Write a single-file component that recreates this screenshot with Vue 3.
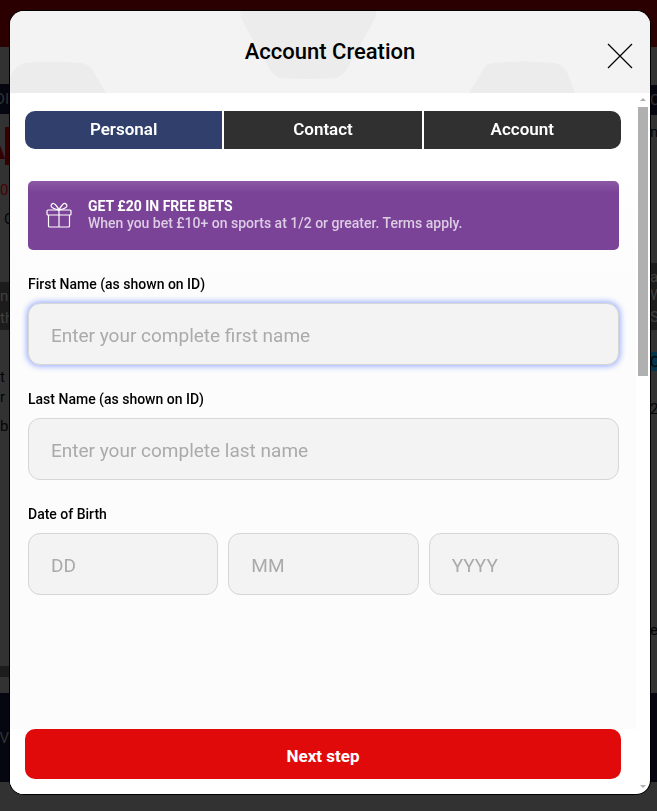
<script setup>
import { ref } from 'vue';

const steps = ['Personal', 'Contact', 'Account'];
const currentStep = ref(0);
const activeField = ref('first');

const form = ref({
    firstName: "",
    lastName: "",
    day: "",
    month: "",
    year: "",
});

// What is left visible of the page on both sides of the dialog
const leftEdge = [
    { h: 47, type: 'maroon' },
    { h: 37 },
    { h: 30, type: 'navy', text: 'DI' },
    { h: 13 },
    { h: 38, type: 'redbar', text: 'A' },
    { h: 15 },
    { h: 20, type: 'redtext', text: '0' },
    { h: 9 },
    { h: 20, type: 'cut', text: 'C' },
    { h: 53 },
    { h: 4, type: 'dark' },
    { h: 20, type: 'dark', text: 'n' },
    { h: 24, type: 'dark', text: 'th' },
    { h: 37 },
    { h: 20, text: 't' },
    { h: 20, text: 'r' },
    { h: 9 },
    { h: 20, text: 'b' },
    { h: 230 },
    { h: 11, type: 'dark' },
    { h: 16 },
    { h: 89, type: 'navy', text: 'V' },
];
const rightEdge = [
    { h: 47, type: 'maroon' },
    { h: 38 },
    { h: 30, type: 'navy', text: 'C' },
    { h: 7 },
    { h: 20, text: 'n' },
    { h: 121 },
    { h: 5, type: 'dark' },
    { h: 18, type: 'dark', text: 'an' },
    { h: 18, type: 'dark', text: 'W' },
    { h: 26, type: 'dark', text: 'St' },
    { h: 22 },
    { h: 19, type: 'blue', text: 'C' },
    { h: 28 },
    { h: 20, text: '2' },
    { h: 201 },
    { h: 20, text: 'e' },
    { h: 53 },
    { h: 89, type: 'navy' },
];

const nextStep = () => {
    if (currentStep.value < steps.length - 1) currentStep.value++;
};
</script>

<template>
    <div class="page">
        <div class="edge left" aria-hidden="true">
            <div v-for="(row, i) in leftEdge" :key="i" class="band" :class="row.type" :style="{ height: row.h + 'px' }">{{ row.text }}</div>
        </div>
        <div class="edge" aria-hidden="true">
            <div v-for="(row, i) in rightEdge" :key="i" class="band" :class="row.type" :style="{ height: row.h + 'px' }">{{ row.text }}</div>
        </div>
    </div>

    <div class="overlay">
        <div class="dialog" role="dialog" aria-labelledby="title">
            <header class="header">
                <svg class="pattern" viewBox="0 0 640 82" preserveAspectRatio="xMidYMin slice" fill="#ececec">
                    <path d="M0 66Q6 53 16 52Q45 49 72 52Q78 53 83 60L96 82H0Z" />
                    <path d="M230 0Q230 6 233 11L260 59Q265 66 272 67Q298 69 325 67Q333 65 337 58L363 11Q366 7 366 0Z" />
                    <path d="M459 82L474 57Q478 52 484 52Q514 49 545 52Q552 53 557 61L565 82Z" />
                </svg>
                <h1 id="title">Account Creation</h1>
                <button type="button" class="close" aria-label="Close">
                    <svg width="26" height="26" viewBox="0 0 26 26" fill="none" stroke="#000" stroke-width="1.2">
                        <path d="M1 1L25 25M25 1L1 25" />
                    </svg>
                </button>
            </header>

            <div class="body">
                <form class="content" @submit.prevent="nextStep">
                    <nav class="tabs">
                        <button v-for="(step, i) in steps" :key="step" type="button" class="tab" :class="{ current: i === currentStep }" @click="currentStep = i">{{ step }}</button>
                    </nav>

                    <div class="fields">
                        <div class="offer">
                            <svg width="26" height="26" viewBox="0 0 26 26" fill="none" stroke="#fff" stroke-width="1.2">
                                <rect x="1" y="8" width="24" height="5" rx="1" />
                                <path d="M2.500 13V24Q2.500 25 3.500 25H22.500Q23.500 25 23.500 24V13M13 8V25" />
                                <path d="M13 8C11 4 8 0 6 2C3 5 8 7 13 8ZM13 8C15 4 18 0 20 2C23 5 18 7 13 8Z" />
                            </svg>
                            <div>
                                <strong>GET £20 IN FREE BETS</strong>
                                <p>When you bet £10+ on sports at 1/2 or greater. Terms apply.</p>
                            </div>
                        </div>

                        <div class="field">
                            <label for="first">First Name (as shown on ID)</label>
                            <input id="first" v-model="form.firstName" type="text" :class="{ active: activeField === 'first' }" placeholder="Enter your complete first name" @focus="activeField = 'first'" />
                        </div>
                        <div class="field">
                            <label for="last">Last Name (as shown on ID)</label>
                            <input id="last" v-model="form.lastName" type="text" :class="{ active: activeField === 'last' }" placeholder="Enter your complete last name" @focus="activeField = 'last'" />
                        </div>
                        <div class="field">
                            <label for="day">Date of Birth</label>
                            <div class="date">
                                <input id="day" v-model="form.day" type="text" placeholder="DD" />
                                <input v-model="form.month" type="text" aria-label="Month of birth" placeholder="MM" />
                                <input v-model="form.year" type="text" aria-label="Year of birth" placeholder="YYYY" />
                            </div>
                        </div>
                    </div>

                    <div class="footer">
                        <button type="submit" class="next">Next step</button>
                    </div>
                </form>

                <div class="scrollbar" aria-hidden="true">
                    <svg width="6" height="4" viewBox="0 0 6 4" fill="#b0b0b0"><path d="M0 3L3 0L6 3Z" /></svg>
                    <div class="track"><div class="thumb"></div></div>
                    <svg width="6" height="4" viewBox="0 0 6 4" fill="#b0b0b0"><path d="M0 0L3 3L6 0Z" /></svg>
                </div>
            </div>
        </div>
    </div>
</template>

<style>
body {
    margin: 0;
    background: #323232;
}
</style>

<style scoped>
.page {
    display: flex;
    justify-content: space-between;
    height: 100vh;
    overflow: hidden;
    background: #323232;
    font: 15px/20px Roboto, "Liberation Sans", sans-serif;
}
.edge {
    width: 7px;
}
.edge.left {
    width: 9px;
}
.band {
    display: flex;
    align-items: center;
    overflow: hidden;
    color: #050505;
}
.left .band.navy,
.left .band.redbar {
    justify-content: flex-end;
}
.left .band.cut {
    padding-left: 4px;
}
.band.maroon {
    background: #2b0000;
    /* the site header runs behind the dialog */
    box-shadow: 0 0 0 100vw #2b0000;
    clip-path: inset(0 -100vw 0 -100vw);
}
.band.navy {
    background: #05060f;
    color: #333;
}
.band.dark {
    background: #1c1c1c;
    color: #404040;
}
.band.blue {
    background: #00354c;
}
.band.redbar {
    box-sizing: border-box;
    border-right: 4px solid #350000;
    color: #350000;
    font-size: 40px;
    font-weight: bold;
}
.band.redtext {
    color: #4c0000;
}
.overlay {
    position: fixed;
    inset: 0;
    display: flex;
    padding: 11px 7px 17px 10px;
    font-family: Roboto, "Liberation Sans", sans-serif;
}
.dialog {
    flex: 1;
    display: flex;
    flex-direction: column;
    overflow: hidden;
    border-radius: 14px;
    background: #fff;
    box-shadow: 0 0 0 1px #000;
}
.header {
    position: relative;
    display: flex;
    align-items: center;
    justify-content: center;
    height: 82px;
    background: #f3f3f3;
}
.pattern {
    position: absolute;
    inset: 0;
    width: 100%;
    height: 100%;
}
h1 {
    position: relative;
    margin: 0;
    font-size: 22px;
    font-weight: 500;
    line-height: 82px;
    color: #000;
}
button {
    border: 0;
    padding: 0;
    font-family: inherit;
    cursor: pointer;
}
.close {
    position: absolute;
    top: 32px;
    right: 17px;
    height: 26px;
    background: none;
}
svg {
    display: block;
    flex: none;
}
.body {
    flex: 1;
    display: flex;
    min-height: 0;
}
.content {
    flex: 1;
    display: flex;
    flex-direction: column;
    min-width: 0;
    background: linear-gradient(#fff 64px, #fcfcfc 180px);
}
.tabs {
    display: flex;
    gap: 2px;
    margin: 18px 15px 14px;
    border-radius: 10px;
    overflow: hidden;
}
.tab {
    flex: 1;
    height: 38px;
    padding-bottom: 2px;
    background: #303030;
    color: #fff;
    font-size: 17px;
    font-weight: 600;
}
.tab.current {
    background: #303f6b;
}
.fields {
    flex: 1;
    padding: 18px 17px 0 18px;
}
.offer {
    display: flex;
    align-items: center;
    gap: 16px;
    box-sizing: border-box;
    height: 69px;
    margin-bottom: 24px;
    padding: 0 18px 2px;
    border-radius: 5px;
    background: linear-gradient(#8c58a5, #7b4397 12px);
    color: #fff;
    font-size: 14px;
    line-height: 17px;
}
.offer strong {
    font-weight: 700;
}
.offer p {
    margin: 0;
    font-weight: 500;
    color: #dccce4;
}
.field {
    margin-bottom: 24px;
}
label {
    display: block;
    margin-bottom: 9px;
    font-size: 14px;
    font-weight: 500;
    line-height: 20px;
    color: #000;
}
input {
    box-sizing: border-box;
    width: 100%;
    min-width: 0;
    height: 62px;
    padding: 2px 22px 0;
    border: 1px solid #d6d6d6;
    border-radius: 12px;
    background: #f3f3f3;
    font-family: inherit;
    font-size: 19px;
    outline: none;
}
input.active {
    box-shadow: 0 0 6px 1px #8fa5ff;
}
input::placeholder {
    color: #aaa;
    opacity: 1;
}
.date {
    display: flex;
    gap: 10px;
}
.footer {
    padding: 0 15px 15px;
    background: #fff;
}
.next {
    display: block;
    width: 100%;
    height: 50px;
    padding-top: 4px;
    border-radius: 10px;
    background: #e10a0a;
    color: #fff;
    font-size: 17px;
    font-weight: 700;
}
.scrollbar {
    display: flex;
    flex-direction: column;
    align-items: center;
    gap: 5px;
    width: 14px;
    padding: 5px 0;
}
.track {
    flex: 1;
}
.thumb {
    width: 10px;
    height: 40%;
    background: #b0b0b0;
}
</style>
